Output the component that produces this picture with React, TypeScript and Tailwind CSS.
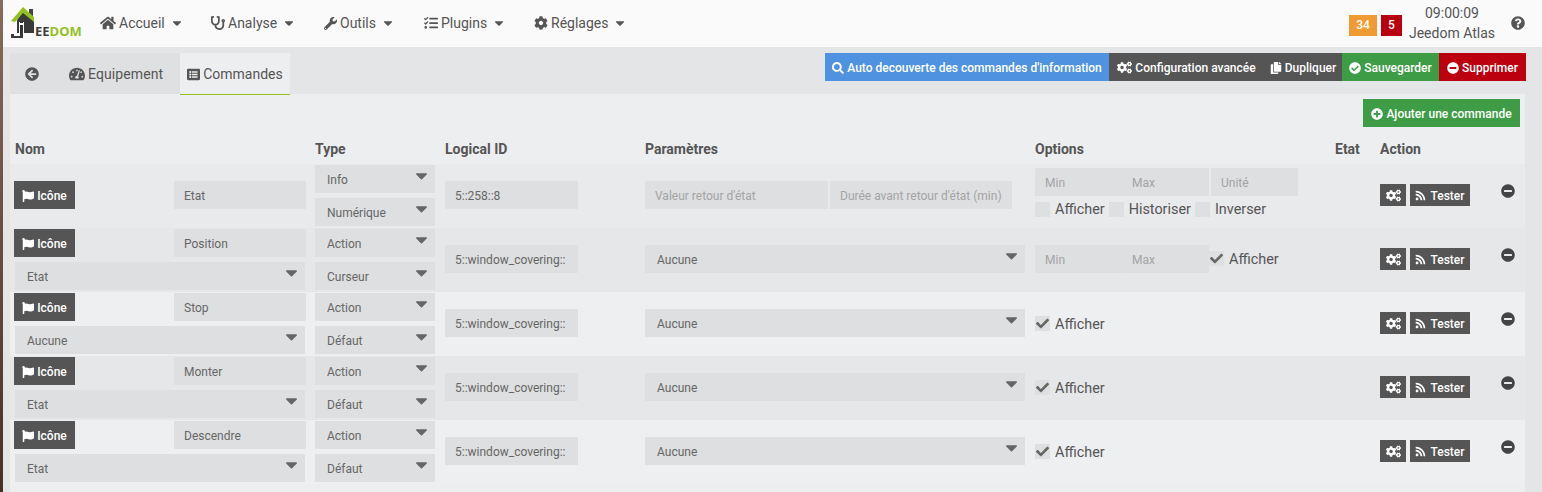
import type { ReactNode } from 'react';
import {
    FaArrowCircleLeft,
    FaCaretDown,
    FaCheck,
    FaCheckCircle,
    FaCog,
    FaCogs,
    FaCopy,
    FaFlag,
    FaHome,
    FaListAlt,
    FaMinusCircle,
    FaPlusCircle,
    FaQuestionCircle,
    FaRss,
    FaSearch,
    FaStethoscope,
    FaTachometerAlt,
    FaTasks,
    FaWrench,
} from 'react-icons/fa';

const menu = [
    { label: 'Accueil', icon: <FaHome size={16} />, width: 'w-[111px]' },
    { label: 'Analyse', icon: <FaStethoscope size={14} />, width: 'w-[113px]' },
    { label: 'Outils', icon: <FaWrench size={13} />, width: 'w-[100px]' },
    { label: 'Plugins', icon: <FaTasks size={14} />, width: 'w-[110px]' },
    { label: 'Réglages', icon: <FaCog size={14} />, width: 'w-[110px]' },
];

const rows = [
    { name: 'Position', type: 'Action', sub: 'Curseur', link: 'Etat', minMax: true, checked: true },
    { name: 'Stop', type: 'Action', sub: 'Défaut', link: 'Aucune', minMax: false, checked: true },
    { name: 'Monter', type: 'Action', sub: 'Défaut', link: 'Etat', minMax: false, checked: true },
    { name: 'Descendre', type: 'Action', sub: 'Défaut', link: 'Etat', minMax: false, checked: true },
];

const gridCols = 'grid grid-cols-[300px_130px_200px_390px_300px_45px_145px]';

function Logo() {
    return (
        <div className="relative w-[74px] h-[40px] shrink-0">
            <svg width="30" height="36" viewBox="0 0 30 36" className="absolute left-0 top-0">
                <path d="M19 5h4v10h-4z" fill="#444" />
                <path d="M7 16 L7 29 L24 29 L24 15 L13 7 Z" fill="#3a3a3a" />
                <path d="M1 17 L13 3 L24 13 L24 18 L13 9 L5 18 Z" fill="#94c11f" />
                <path d="M9 18h5v11H9z" fill="#fff" />
                <path d="M10 21h3v9h-3zM10 17h3v2h-3z" fill="#333" />
                <path d="M1 34h12v-5h-3v3H4v-2H1z" fill="#3a3a3a" />
            </svg>
            <span className="absolute left-[25px] top-[19px] text-[13px] leading-[16px] font-bold text-[#94c11f] font-['Open_Sans',sans-serif]">
                <span className="text-[#3f3f3f]">EE</span>DOM
            </span>
        </div>
    );
}

function NavBar() {
    return (
        <header className="h-[47px] bg-[#fafafa] flex items-center pl-[7px] pr-[17px] text-[#555555]">
            <Logo />
            <nav className="flex items-center ml-[16px] -mt-[1px]">
                {menu.map((item) => (
                    <div key={item.label} className={`flex items-center gap-[3px] text-[14px] ${item.width}`}>
                        {item.icon}
                        <span>{item.label}</span>
                        <FaCaretDown size={14} className="ml-[2px]" />
                    </div>
                ))}
            </nav>
            <div className="ml-auto flex items-center">
                <span className="w-[28px] h-[21px] mt-[3px] bg-[#f09a33] text-white text-[12px] font-medium flex items-center justify-center">34</span>
                <span className="w-[21px] h-[21px] mt-[3px] ml-[4px] bg-[#b90010] text-white text-[12px] font-medium flex items-center justify-center">5</span>
                <div className="w-[92px] ml-[4px] -mt-[1px] text-center text-[14px] leading-[20px] text-[#555555]">
                    <div>09:00:09</div>
                    <div>Jeedom Atlas</div>
                </div>
                <FaQuestionCircle size={14} className="ml-[13px] -mt-[2px]" />
            </div>
        </header>
    );
}

function ActionButton({ color, icon, children, width }: { color: string; icon: ReactNode; children: ReactNode; width: string }) {
    return (
        <div className={`h-[28px] pt-[1px] ${color} ${width} text-white text-[12px] font-medium flex items-center justify-center gap-[3px]`}>
            {icon}
            <span>{children}</span>
        </div>
    );
}

function TabsBar() {
    return (
        <div className="h-[47px] flex pt-[6px] pr-[16px]">
            <div className="w-[170px] h-[41px] pt-[1px] bg-[#dfe0e2] flex items-center text-[#555555] text-[14px]">
                <FaArrowCircleLeft size={14} className="ml-[15px]" />
                <FaTachometerAlt size={16} className="ml-[30px]" />
                <span className="ml-[3px] tracking-[0.1px]">Equipement</span>
            </div>
            <div className="relative z-10 w-[110px] h-[42px] pt-[1px] bg-[#edeef0] border-b border-[#93c01f] flex items-center justify-center gap-[3px] text-[#555555] text-[14px]">
                <FaListAlt size={13} />
                <span>Commandes</span>
            </div>
            <div className="ml-auto flex">
                <ActionButton color="bg-[#4f93e0]" width="w-[284px]" icon={<FaSearch size={12} />}>Auto decouverte des commandes d'information</ActionButton>
                <ActionButton color="bg-[#555555]" width="w-[155px]" icon={<FaCogs size={15} />}>Configuration avancée</ActionButton>
                <ActionButton color="bg-[#555555]" width="w-[78px]" icon={<FaCopy size={12} />}>Dupliquer</ActionButton>
                <ActionButton color="bg-[#3f9c46]" width="w-[97px]" icon={<FaCheckCircle size={12} />}>Sauvegarder</ActionButton>
                <ActionButton color="bg-[#bd0010]" width="w-[87px]" icon={<FaMinusCircle size={12} />}>Supprimer</ActionButton>
            </div>
        </div>
    );
}

function TextField({ value, width, placeholder }: { value?: string; width: string; placeholder?: string }) {
    return (
        <div className={`h-[28px] pt-[1px] ${width} bg-[#dedfe0] rounded-[1px] px-[10px] flex items-center text-[12px] overflow-hidden whitespace-nowrap ${placeholder ? 'text-[#a3a4a6]' : 'text-[#666666]'}`}>
            {value ?? placeholder}
        </div>
    );
}

function SelectField({ value, width }: { value: string; width: string }) {
    return (
        <div className={`relative h-[28px] ${width} bg-[#dedfe0] pl-[12px] flex items-center text-[12px] text-[#666666]`}>
            <span className="mt-[1px]">{value}</span>
            <FaCaretDown size={19} className="absolute right-[4px] top-[1px] text-[#666666]" />
        </div>
    );
}

function IconButton() {
    return (
        <div className="h-[28px] pt-[1px] w-[61px] bg-[#555555] text-white text-[12px] font-medium flex items-center justify-center gap-[3px]">
            <FaFlag size={12} />
            <span>Icône</span>
        </div>
    );
}

function CheckOption({ label, checked }: { label: string; checked: boolean }) {
    return (
        <div className="flex items-center">
            <span className="w-[15px] h-[15px] bg-[#dedfe0] flex items-center justify-center text-[#666666]">
                {checked && <FaCheck size={13} />}
            </span>
            <span className="ml-[5px] mt-[1px] text-[14.4px] text-[#555555]">{label}</span>
        </div>
    );
}

function RowActions() {
    return (
        <div className="flex items-center h-full">
            <div className="flex gap-[4px] -mt-[2px]">
                <div className="w-[26px] h-[22px] bg-[#555555] text-white flex items-center justify-center">
                    <FaCogs size={15} />
                </div>
                <div className="w-[60px] h-[22px] pt-[1px] bg-[#555555] text-white text-[12px] font-medium flex items-center justify-center gap-[4px]">
                    <FaRss size={11} />
                    <span>Tester</span>
                </div>
            </div>
            <FaMinusCircle size={14} className="ml-[31px] -mt-[11px] text-[#444444]" />
        </div>
    );
}

function InfoRow() {
    return (
        <div className={`${gridCols} h-[64px] bg-[#e9eaeb] pl-[5px]`}>
            <div className="flex items-center justify-between pr-[9px] -ml-[1px] pb-[2px]">
                <IconButton />
                <TextField value="Etat" width="w-[132px]" />
            </div>
            <div className="flex flex-col gap-[5px] pt-[1px]">
                <SelectField value="Info" width="w-[120px]" />
                <SelectField value="Numérique" width="w-[120px]" />
            </div>
            <div className="flex items-center pb-[2px]">
                <TextField value="5::258::8" width="w-[133px]" />
            </div>
            <div className="flex items-center gap-[2px] pb-[2px]">
                <TextField placeholder="Valeur retour d'état" width="w-[183px]" />
                <TextField placeholder="Durée avant retour d'état (min)" width="w-[182px]" />
            </div>
            <div className="pt-[4px]">
                <div className="flex gap-[2px]">
                    <div className="flex">
                        <TextField placeholder="Min" width="w-[87px]" />
                        <TextField placeholder="Max" width="w-[87px]" />
                    </div>
                    <TextField placeholder="Unité" width="w-[87px]" />
                </div>
                <div className="flex gap-[4px] mt-[2px]">
                    <CheckOption label="Afficher" checked={false} />
                    <CheckOption label="Historiser" checked={false} />
                    <CheckOption label="Inverser" checked={false} />
                </div>
            </div>
            <div />
            <RowActions />
        </div>
    );
}

function ActionRow({ row, shaded }: { row: (typeof rows)[number]; shaded: boolean }) {
    return (
        <div className={`${gridCols} h-[64px] pl-[5px] ${shaded ? 'bg-[#e6e7e8]' : 'bg-[#eeeff0]'}`}>
            <div className="flex flex-col gap-[5px] pt-[1px]">
                <div className="flex items-center justify-between pr-[9px] -ml-[1px]">
                    <IconButton />
                    <TextField value={row.name} width="w-[132px]" />
                </div>
                <SelectField value={row.link} width="w-[290px]" />
            </div>
            <div className="flex flex-col gap-[5px] pt-[1px]">
                <SelectField value={row.type} width="w-[120px]" />
                <SelectField value={row.sub} width="w-[120px]" />
            </div>
            <div className="flex items-center pb-[2px]">
                <TextField value="5::window_covering::" width="w-[133px]" />
            </div>
            <div className="flex items-center pb-[2px]">
                <SelectField value="Aucune" width="w-[380px]" />
            </div>
            <div className={`flex items-center ${row.minMax ? 'pb-[2px]' : ''}`}>
                {row.minMax && (
                    <div className="flex">
                        <TextField placeholder="Min" width="w-[87px]" />
                        <TextField placeholder="Max" width="w-[87px]" />
                    </div>
                )}
                <CheckOption label="Afficher" checked={row.checked} />
            </div>
            <div />
            <RowActions />
        </div>
    );
}

function CommandsTable() {
    return (
        <div className="mr-[17px] bg-[#edeef0]">
            <div className="h-[41px] pt-[5px] pr-[5px] flex justify-end">
                <div className="w-[157px] h-[28px] pt-[1px] bg-[#3f9c46] text-white text-[12px] font-medium flex items-center justify-center gap-[3px]">
                    <FaPlusCircle size={12} />
                    <span>Ajouter une commande</span>
                </div>
            </div>
            <div className={`${gridCols} h-[29px] pl-[5px] items-center text-[14px] font-bold text-[#555555]`}>
                <div>Nom</div>
                <div>Type</div>
                <div>Logical ID</div>
                <div>Paramètres</div>
                <div>Options</div>
                <div>Etat</div>
                <div>Action</div>
            </div>
            <InfoRow />
            {rows.map((row, i) => (
                <ActionRow key={row.name} row={row} shaded={i % 2 === 0} />
            ))}
            <div className="h-[8px]" />
        </div>
    );
}

export default function App() {
    return (
        <div className="w-[1542px] h-[492px] overflow-hidden flex font-['Roboto',sans-serif] bg-[#e4e5e7]">
            <div className="w-[3px] shrink-0 bg-linear-to-b from-[#8b6a5a] to-[#4a3020]" />
            <div className="flex-1 min-w-0">
                <NavBar />
                <div className="pl-[7px]">
                    <TabsBar />
                    <CommandsTable />
                </div>
            </div>
        </div>
    );
}
